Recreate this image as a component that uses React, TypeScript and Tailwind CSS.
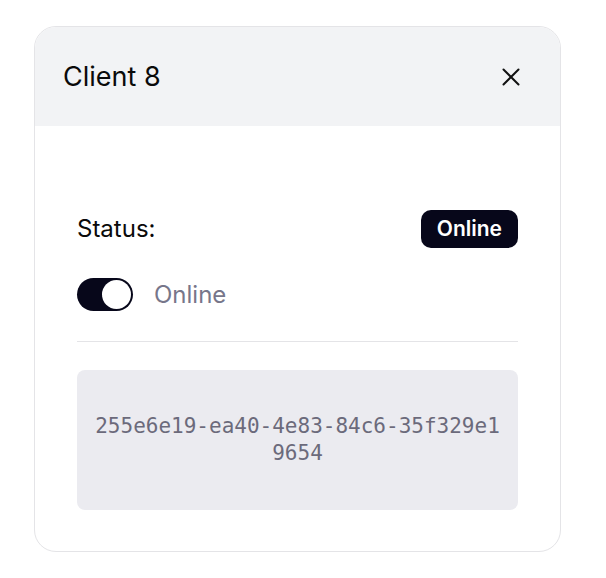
import { useState } from "react";

export default function App() {
  const [online, setOnline] = useState(true);

  return (
    <main className="min-h-screen bg-white pt-[26px] pl-[34px] font-['Inter',sans-serif]">
      <div className="w-[527px] h-[526px] rounded-[22px] border border-[#e4e4e7] bg-white overflow-hidden flex flex-col">
        <div className="h-[99px] shrink-0 bg-[#f2f3f5] flex items-center justify-between pl-[28px] pr-[39px]">
          <h2 className="text-[27px] text-[#0a0a0a] leading-none">Client 8</h2>
          <button className="w-5 h-5 flex items-center justify-center text-[#111]">
            <svg width="20" height="20" viewBox="0 0 20 20" fill="none" stroke="currentColor" strokeWidth="2" strokeLinecap="round">
              <path d="M2.5 2.5L17.5 17.5M17.5 2.5L2.5 17.5" />
            </svg>
          </button>
        </div>

        <div className="flex flex-col px-[42px] pt-[84px]">
          <div className="flex items-center justify-between h-[38px]">
            <span className="text-[24px] leading-none text-[#0a0a0a]">Status:</span>
            <span className="h-[38px] px-[16px] rounded-[10px] bg-[#07071a] text-white text-[21px] font-semibold flex items-center">
              {online ? "Online" : "Offline"}
            </span>
          </div>

          <div className="flex items-center gap-[21px] mt-[30px] h-[33px]">
            <button
              onClick={() => setOnline(!online)}
              className={`w-[56px] h-[33px] rounded-full p-[2px] flex items-center ${online ? "bg-[#07071a] justify-end" : "bg-[#e4e4e7] justify-start"}`}
            >
              <span className="w-[29px] h-[29px] rounded-full bg-white block" />
            </button>
            <span className="text-[24px] leading-none text-[#77768a]">{online ? "Online" : "Offline"}</span>
          </div>

          <div className="h-px bg-[#e4e4e7] mt-[30px]" />

          <div className="mt-[28px] h-[140px] rounded-lg bg-[#ebebf0] px-4 flex items-center justify-center text-center">
            <p className="font-['DejaVu_Sans_Mono',monospace] text-[21px] leading-[27px] text-[#6b6a7b] break-all">
              255e6e19-ea40-4e83-84c6-35f329e19654
            </p>
          </div>
        </div>
      </div>
    </main>
  );
}
